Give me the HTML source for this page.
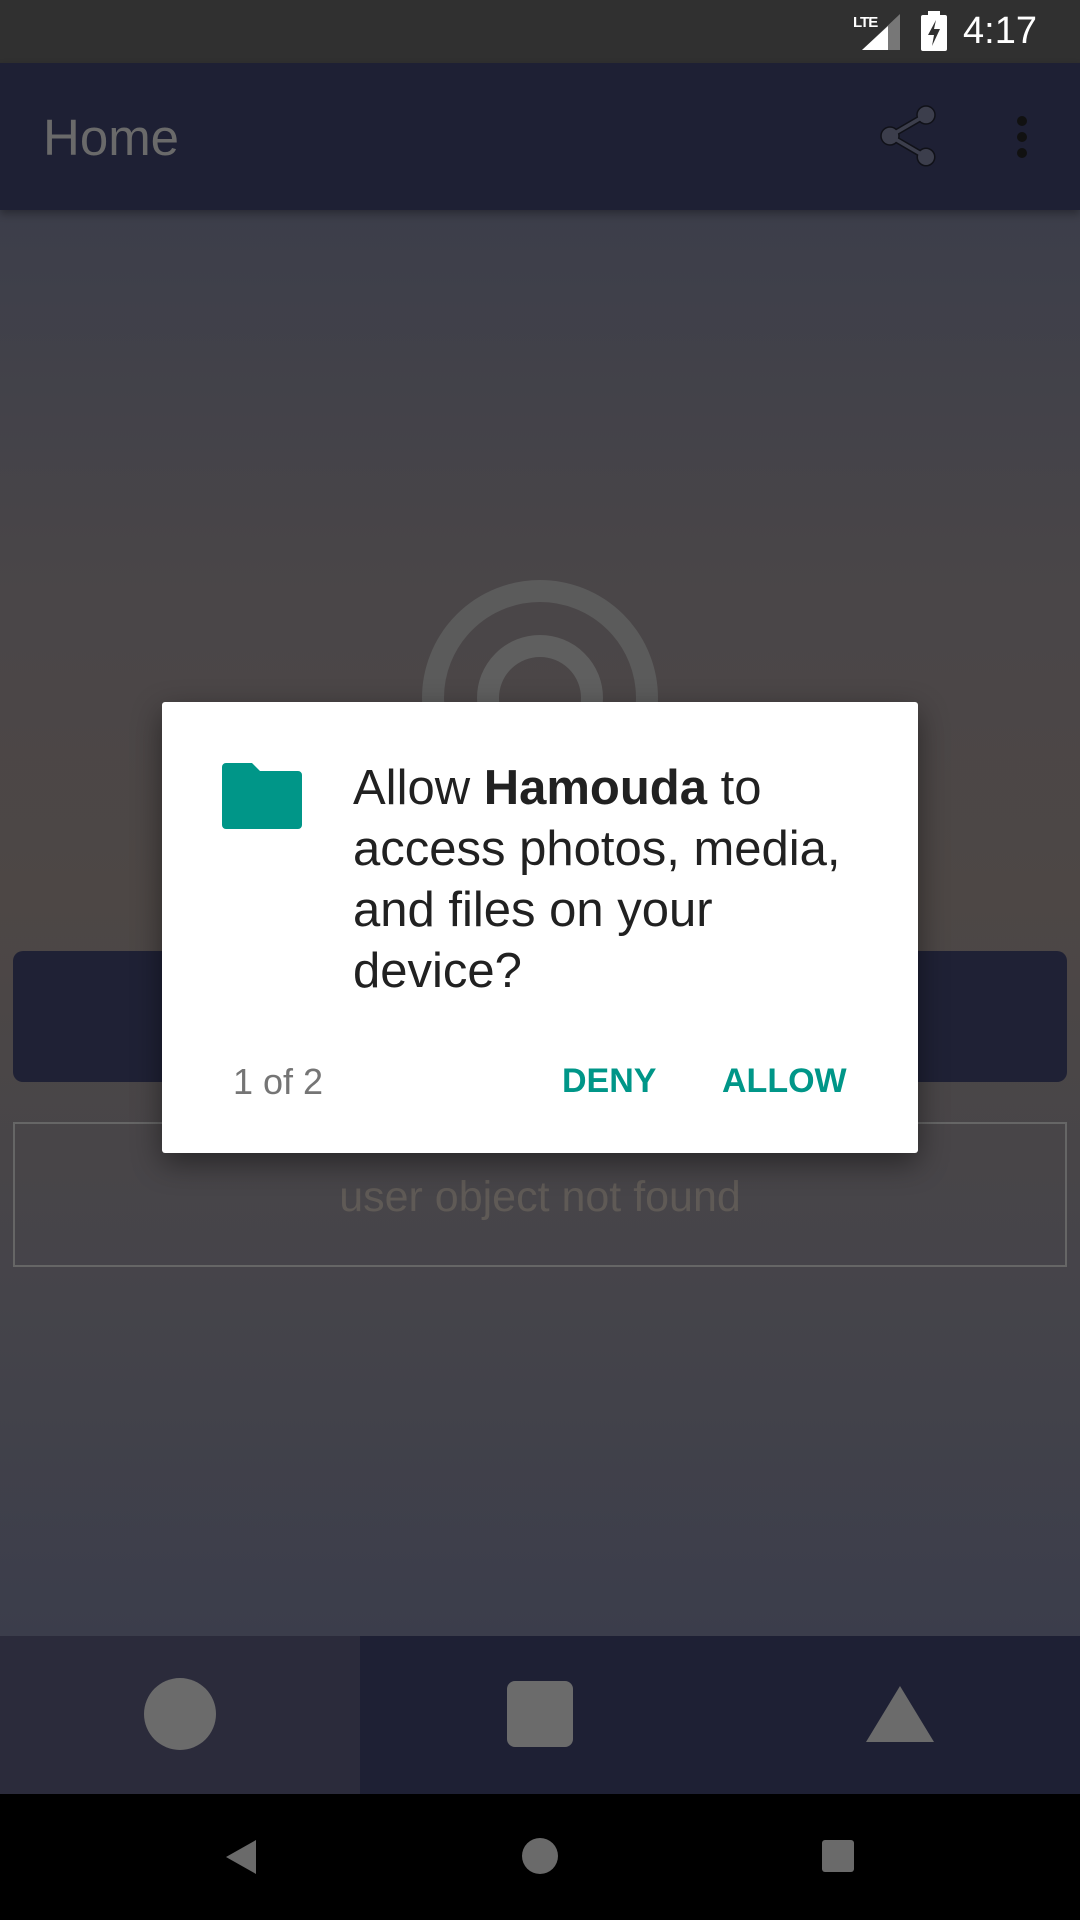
<!DOCTYPE html>
<html><head><meta charset="utf-8"><style>
*{margin:0;padding:0;box-sizing:border-box}
body{width:1080px;height:1920px;position:relative;overflow:hidden;font-family:"Liberation Sans",sans-serif;background:linear-gradient(180deg,#3c3e4a 210px,#4a4648 600px,#4d4745 900px,#45444a 1300px,#3b3d4b 1636px)}
.abs{position:absolute}
</style></head><body>
<div class="abs" style="left:0;top:0;width:1080px;height:63px;background:#303030"></div>
<div class="abs" style="left:853px;top:14px;font-size:15px;color:#fff;font-weight:bold;letter-spacing:-1px">LTE</div>
<svg class="abs" style="left:862px;top:14px" width="40" height="36"><polygon points="38,0 38,36 0,36" fill="#777"/><polygon points="26,12 26,36 0,36" fill="#fff"/></svg>
<svg class="abs" style="left:921px;top:11px" width="26" height="40"><rect x="7" y="0" width="12" height="5" fill="#fff"/><rect x="0" y="4" width="26" height="36" rx="2" fill="#fff"/><polygon points="15,9 7,24 13,24 11,35 19,18 13,18" fill="#303030"/></svg>
<div class="abs" style="left:963px;top:10px;font-size:38px;color:#fff">4:17</div>
<div class="abs" style="left:0;top:63px;width:1080px;height:147px;background:#1e2034;box-shadow:0 4px 8px rgba(0,0,0,.3)"></div>
<div class="abs" style="left:43px;top:108px;font-size:51px;color:#6a6a6a;font-weight:500">Home</div>
<svg class="abs" style="left:872px;top:100px" width="72" height="72" viewBox="0 0 24 24"><path d="M18 16.08c-.76 0-1.44.3-1.960.77L8.91 12.7c.05-.23.09-.46.09-.7s-.04-.47-.09-.7l7.05-4.11c.54.5 1.250.81 2.040.81 1.66 0 3-1.34 3-3s-1.34-3-3-3-3 1.34-3 3c0 .24.04.47.09.7L8.04 9.81C7.5 9.31 6.79 9 6 9c-1.66 0-3 1.34-3 3s1.34 3 3 3c.79 0 1.5-.31 2.04-.81l7.12 4.16c-.05.21-.08.43-.08.65 0 1.61 1.31 2.92 2.92 2.92s2.920-1.31 2.920-2.92-1.31-2.92-2.92-2.92z" fill="#3c3e4c" stroke="#101118" stroke-width=".5"/></svg>
<svg class="abs" style="left:1012px;top:114px" width="20" height="46"><circle cx="10" cy="7" r="5" fill="#111"/><circle cx="10" cy="23" r="5" fill="#111"/><circle cx="10" cy="39" r="5" fill="#111"/></svg>
<svg class="abs" style="left:420px;top:578px" width="240" height="240"><circle cx="120" cy="120" r="107" fill="none" stroke="#5b5b5b" stroke-width="22"/><circle cx="120" cy="120" r="52" fill="none" stroke="#5f5f5f" stroke-width="22"/></svg>
<div class="abs" style="left:13px;top:951px;width:1054px;height:131px;background:#1f2135;border-radius:10px"></div>
<div class="abs" style="left:13px;top:1122px;width:1054px;height:145px;border:2px solid #666"></div>
<div class="abs" style="left:0;top:1173px;width:1080px;text-align:center;font-size:43px;color:#5f5a56">user object not found</div>
<div class="abs" style="left:0;top:1636px;width:360px;height:158px;background:#2b2b3b"></div>
<div class="abs" style="left:360px;top:1636px;width:720px;height:158px;background:#1e2034"></div>
<div class="abs" style="left:144px;top:1678px;width:72px;height:72px;border-radius:50%;background:#6b6b6b"></div>
<div class="abs" style="left:507px;top:1681px;width:66px;height:66px;border-radius:8px;background:#6b6b6b"></div>
<svg class="abs" style="left:866px;top:1686px" width="68" height="56"><polygon points="34,0 68,56 0,56" fill="#6b6b6b"/></svg>
<div class="abs" style="left:0;top:1794px;width:1080px;height:126px;background:#000"></div>
<svg class="abs" style="left:224px;top:1838px" width="34" height="38"><polygon points="32,2 32,36 2,19" fill="#6a6a6a"/></svg>
<div class="abs" style="left:522px;top:1838px;width:36px;height:36px;border-radius:50%;background:#6a6a6a"></div>
<div class="abs" style="left:822px;top:1840px;width:32px;height:32px;border-radius:3px;background:#6a6a6a"></div>
<div class="abs" style="left:162px;top:702px;width:756px;height:451px;background:#fff;border-radius:3px;box-shadow:0 10px 30px rgba(0,0,0,.45)"></div>
<svg class="abs" style="left:222px;top:763px" width="80" height="66" viewBox="0 0 80 66"><path d="M4 0h26l8 8h38a4 4 0 0 1 4 4v50a4 4 0 0 1-4 4H4a4 4 0 0 1-4-4V4a4 4 0 0 1 4-4z" fill="#009688"/></svg>
<div class="abs" style="left:353px;top:758px;font-size:49px;line-height:61px;color:#212121;white-space:nowrap">Allow <b>Hamouda</b> to<br>access photos, media,<br>and files on your<br>device?</div>
<div class="abs" style="left:233px;top:1061px;font-size:36px;color:#757575">1 of 2</div>
<div class="abs" style="left:562px;top:1062px;font-size:34px;color:#009688;font-weight:bold">DENY</div>
<div class="abs" style="left:722px;top:1062px;font-size:34px;color:#009688;font-weight:bold">ALLOW</div>
</body></html>
